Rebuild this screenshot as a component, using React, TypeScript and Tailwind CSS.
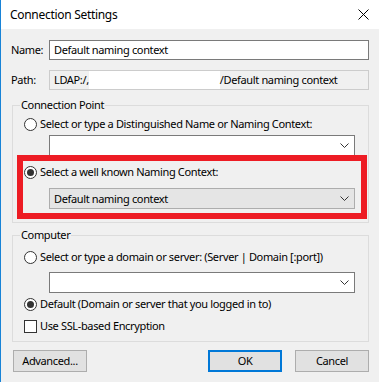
import * as React from "react";

// Windows-style connection dialog
const font = { fontFamily: '"Noto Sans", "Liberation Sans", sans-serif' };

function Chevron() {
  return (
    <svg width="9" height="5" viewBox="0 0 9 5" className="shrink-0">
      <path d="M0.5 0.5 L4.5 4.5 L8.5 0.5" fill="none" stroke="#333" strokeWidth="1" />
    </svg>
  );
}

function Radio({ checked }: { checked?: boolean }) {
  return (
    <span className="w-[13px] h-[13px] rounded-full border border-[#333] bg-white flex items-center justify-center shrink-0">
      {checked && <span className="w-[7px] h-[7px] rounded-full bg-[#333]" />}
    </span>
  );
}

function Combo({ text, disabled }: { text?: string; disabled?: boolean }) {
  return (
    <div
      className={
        disabled
          ? "ml-[36px] w-[306px] h-[21px] border border-[#adadad] bg-[#e5e5e5] flex items-center pl-[4px] pr-[5px]"
          : "ml-[36px] w-[306px] h-[21px] border border-[#7a7a7a] bg-white flex items-center pl-[4px] pr-[5px]"
      }
    >
      <span className="flex-1 text-[11px] leading-[16px] text-black whitespace-nowrap">{text}</span>
      <Chevron />
    </div>
  );
}

function RadioRow({ label, checked }: { label: string; checked?: boolean }) {
  return (
    <div className="h-[16px] flex items-center pl-[11px] gap-[3px] text-[11px] leading-[16px] text-black whitespace-nowrap">
      <Radio checked={checked} />
      <span>{label}</span>
    </div>
  );
}

function Button({ label, primary }: { label: string; primary?: boolean }) {
  return (
    <button
      className={
        primary
          ? "w-[74px] h-[22px] bg-[#e1e1e1] border-2 border-[#0078d7] text-[11px] text-black flex items-center justify-center"
          : "w-[74px] h-[22px] bg-[#e1e1e1] border border-[#adadad] text-[11px] text-black flex items-center justify-center"
      }
    >
      {label}
    </button>
  );
}

export default function App() {
  return (
    <div
      className="w-[379px] h-[382px] border-l border-[#1883d7] bg-[#f0f0f0] flex flex-col overflow-hidden tracking-[-0.35px]"
      style={font}
    >
      {/* title bar */}
      <div className="h-[29px] bg-white flex items-center justify-between pl-[9px] pr-[10px] shrink-0">
        <span className="text-[12px] text-black tracking-[-0.3px]">Connection Settings</span>
        <svg width="11" height="11" viewBox="0 0 11 11">
          <path d="M0.5 0.5 L10.5 10.5 M10.5 0.5 L0.5 10.5" stroke="#000" strokeWidth="1" />
        </svg>
      </div>

      {/* name */}
      <div className="mt-[11px] h-[20px] flex items-center text-[11px] text-black whitespace-nowrap">
        <span className="w-[48px] pl-[10px]">Name:</span>
        <div className="w-[320px] h-[20px] border border-[#7a7a7a] bg-white flex items-center pl-[4px]">
          Default naming context
        </div>
      </div>

      {/* path */}
      <div className="mt-[10px] h-[20px] flex items-center text-[11px] text-black whitespace-nowrap">
        <span className="w-[48px] pl-[10px]">Path:</span>
        <div className="w-[320px] h-[20px] border border-[#cccccc] bg-[#f0f0f0] flex items-stretch pl-[4px]">
          <span className="shrink-0 flex items-center">LDAP:/,</span>
          <span className="w-[131px] shrink-0 bg-white" />
          <span className="shrink-0 flex items-center">/Default naming context</span>
        </div>
      </div>

      {/* connection point group */}
      <div className="relative mt-[15px] ml-[11px] w-[357px] h-[118px] border border-[#dcdcdc] pt-[10px] flex flex-col">
        <span className="absolute -top-[9px] left-[7px] px-[1px] bg-[#f0f0f0] text-[11px] leading-[16px] text-black whitespace-nowrap">
          Connection Point
        </span>
        <RadioRow label="Select or type a Distinguished Name or Naming Context:" />
        <div className="mt-[3px]">
          <Combo />
        </div>
        <div className="mt-[8px]">
          <RadioRow label="Select a well known Naming Context:" checked />
        </div>
        <div className="mt-[8px]">
          <Combo text="Default naming context" disabled />
        </div>
        <div className="absolute left-[4px] top-[49px] w-[350px] h-[64px] border-[6px] border-[#ed1c24]" />
      </div>

      {/* computer group */}
      <div className="relative mt-[12px] ml-[11px] w-[357px] h-[107px] border border-[#dcdcdc] pt-[13px] flex flex-col">
        <span className="absolute -top-[9px] left-[7px] px-[1px] bg-[#f0f0f0] text-[11px] leading-[16px] text-black whitespace-nowrap">
          Computer
        </span>
        <RadioRow label="Select or type a domain or server: (Server | Domain [:port])" />
        <div className="mt-[7px]">
          <Combo />
        </div>
        <div className="mt-[3px]">
          <RadioRow label="Default (Domain or server that you logged in to)" checked />
        </div>
        <div className="mt-[6px] h-[16px] flex items-center pl-[11px] gap-[3px] text-[11px] leading-[16px] text-black whitespace-nowrap">
          <span className="w-[13px] h-[13px] border border-[#333] bg-white shrink-0" />
          <span>Use SSL-based Encryption</span>
        </div>
      </div>

      {/* buttons */}
      <div className="mt-[8px] flex items-center pl-[12px] pr-[10px]">
        <Button label="Advanced..." />
        <div className="flex-1" />
        <Button label="OK" primary />
        <div className="w-[13px]" />
        <Button label="Cancel" />
      </div>
    </div>
  );
}
